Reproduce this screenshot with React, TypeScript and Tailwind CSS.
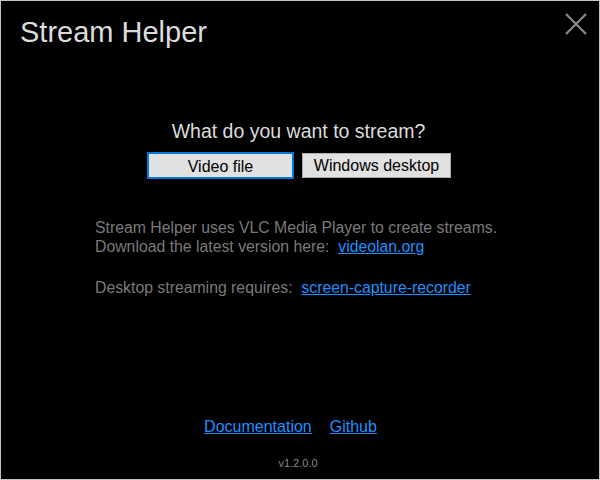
export default function App() {
  return (
    <div
      className="w-[600px] h-[480px] bg-black border border-[#c4c4c4] flex flex-col relative"
      style={{ fontFamily: '"Liberation Sans", Arial, sans-serif' }}
    >
      {/* title bar */}
      <div className="flex items-start justify-between pl-[19px] pr-[11px] pt-[12px]">
        <h1 className="text-[29px] leading-[38px] text-[#dcdcdc]">Stream Helper</h1>
        <svg width="24" height="24" viewBox="0 0 24 24" className="mt-[-1px]">
          <path d="M2 2 L22 22 M22 2 L2 22" stroke="#8a8a8a" strokeWidth="2.2" />
        </svg>
      </div>

      {/* stream choice */}
      <div className="flex flex-col items-center mt-[68px]">
        <p className="text-[19.5px] leading-[24px] text-[#dcdcdc] ml-[-3px]">What do you want to stream?</p>
        <div className="flex gap-[8px] mt-[9px] ml-[-2px]">
          <button className="w-[147px] h-[27px] pt-[2px] bg-[#e1e1e1] border-2 border-[#0078d7] text-[16px] leading-[20px] text-black">
            Video file
          </button>
          <button className="w-[149px] h-[25px] mt-[1px] pt-[1px] bg-[#e1e1e1] border border-[#adadad] text-[16px] leading-[20px] text-black">
            Windows desktop
          </button>
        </div>
      </div>

      {/* info */}
      <div className="pl-[94px] mt-[39px] text-[15.8px] leading-[19px] text-[#7a7a7a]">
        <p>Stream Helper uses VLC Media Player to create streams.</p>
        <p>
          Download the latest version here:&nbsp;{" "}
          <a href="#" className="text-[#1e90ff] underline">videolan.org</a>
        </p>
        <p className="mt-[22px]">
          Desktop streaming requires:&nbsp;{" "}
          <a href="#" className="text-[#1e90ff] underline">screen-capture-recorder</a>
        </p>
      </div>

      {/* footer */}
      <div className="mt-auto flex flex-col items-center pb-[9px]">
        <div className="flex gap-[18px] text-[16px] leading-[20px] mr-[19px]">
          <a href="#" className="text-[#1e90ff] underline">Documentation</a>
          <a href="#" className="text-[#1e90ff] underline">Github</a>
        </div>
        <p className="text-[11px] leading-[14px] text-[#8a8a8a] mt-[19px] ml-[-4px]">v1.2.0.0</p>
      </div>
    </div>
  );
}
